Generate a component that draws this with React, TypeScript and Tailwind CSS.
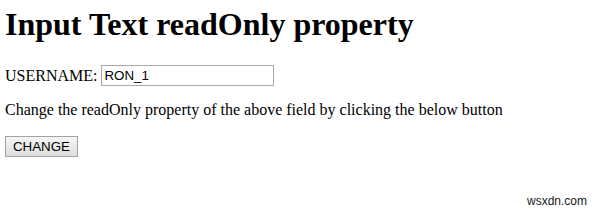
import { useState } from "react";

const SERIF = "font-['Liberation_Serif','Times_New_Roman',serif]";
const SANS = "font-['Liberation_Sans',Arial,sans-serif]";

export default function App() {
  const [readOnly, setReadOnly] = useState(true);
  const [name, setName] = useState("RON_1");

  return (
    <div className={`relative h-[210px] w-[600px] overflow-hidden bg-white px-[5px] pt-[6px] text-black ${SERIF}`}>
      <h1 className="text-[32px] font-bold leading-[37px]">
        Input Text readOnly property
      </h1>

      <div className="mt-[22px] flex h-[21px] items-center">
        <span className="text-[16px] leading-[18px]">USERNAME:</span>
        <input
          type="text"
          value={name}
          readOnly={readOnly}
          onChange={(e) => setName(e.target.value)}
          className={`ml-[4px] h-[21px] w-[173px] border border-[#a9a9a9] bg-white px-[2px] text-[13.33px] text-black outline-none ${SANS}`}
        />
      </div>

      <p className="mt-[15px] text-[16px] leading-[18px]">
        Change the readOnly property of the above field by clicking the below button
      </p>

      <button
        type="button"
        onClick={() => setReadOnly((r) => !r)}
        className={`mt-[17px] block h-[21px] w-[73px] border border-[#a3a3a3] bg-gradient-to-b from-[#f5f5f5] to-[#dedede] text-[13.33px] leading-[19px] text-black ${SANS}`}
      >
        CHANGE
      </button>

      {/* watermark sits over the page corner */}
      <span className={`absolute left-[527px] top-[194px] text-[12px] leading-[14px] text-[#1a1a1a] ${SANS}`}>
        wsxdn.com
      </span>
    </div>
  );
}
